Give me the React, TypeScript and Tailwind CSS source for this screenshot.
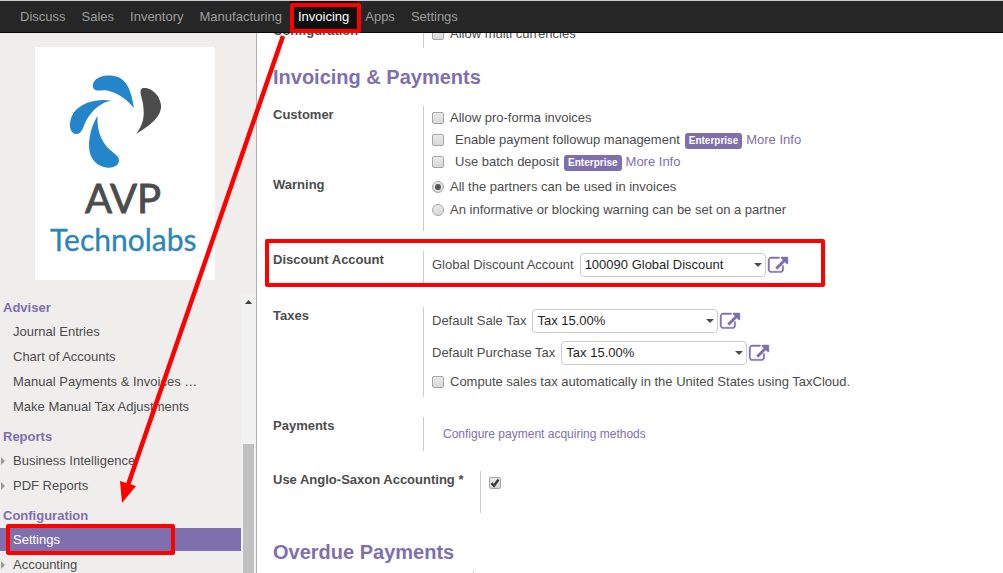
import React, { ReactNode, useId } from "react";

const navItems = ["Discuss", "Sales", "Inventory", "Manufacturing", "Invoicing", "Apps", "Settings"];

type MenuItem = { label: string; parent?: boolean; active?: boolean };
const menu: { title: string; items: MenuItem[] }[] = [
  {
    title: "Adviser",
    items: [
      { label: "Journal Entries" },
      { label: "Chart of Accounts" },
      { label: "Manual Payments & Invoices …" },
      { label: "Make Manual Tax Adjustments" },
    ],
  },
  {
    title: "Reports",
    items: [
      { label: "Business Intelligence", parent: true },
      { label: "PDF Reports", parent: true },
    ],
  },
  {
    title: "Configuration",
    items: [
      { label: "Settings", active: true },
      { label: "Accounting", parent: true },
    ],
  },
];

function Logo() {
  return (
    <svg viewBox="0 0 180 233" className="block w-[180px] shrink-0 bg-white" role="img" aria-label="AVP Technolabs">
      <g fill="#2585cb">
        <path d="M59 42C55 36 62 28 75 28.500C91 29 96 42 99 61C92 53 84 46 72 43.500C66 42.500 62 45 59 42Z" />
        <path d="M76 53.500C63 51.500 46 55 38.500 66C33 75 34 86 41 87C48 88 48 77 54 69C60 61 66 56 76 53.500Z" />
        <path d="M62.500 69C55 81 51 100 57 111C63 122 78 123 83 117C87 110 79 107 73 101C66 93 62 84 62.500 69Z" />
      </g>
      <path fill="#4c4c4c" d="M108 41C116 40 125 48 126 58C127 70 114 79 101 87C108 78 110 70 108 57C107 50 103 42 108 41Z" />
      <text x="50" y="166" fill="#4c4c4c" stroke="#4c4c4c" strokeWidth="0.900" fontSize="40" fontFamily="Lato, sans-serif">AVP</text>
      <text x="15" y="204" fill="#2a86b4" stroke="#2a86b4" strokeWidth="0.300" fontSize="30" fontFamily="Lato, sans-serif">Technolabs</text>
    </svg>
  );
}

function Check({ label, checked, wide, id }: { label?: string; checked?: boolean; wide?: boolean; id: string }) {
  return (
    <>
      <span className="relative flex size-3 shrink-0">
        <input
          id={id}
          type="checkbox"
          defaultChecked={checked}
          aria-label={label ? undefined : "Use Anglo-Saxon Accounting"}
          className="peer size-3 appearance-none rounded-[2px] border border-[#a6a6a6] bg-linear-to-b from-[#eaeaea] to-[#d8d8d8]"
        />
        <svg viewBox="0 0 12 12" className="pointer-events-none absolute inset-0 hidden peer-checked:block">
          <path d="M2.500 6.200L5 8.800L9.500 2.500" fill="none" stroke="#3c3c3c" strokeWidth="2.400" />
        </svg>
      </span>
      {label && (
        <label htmlFor={id} className={wide ? "ml-[11px]" : "ml-1.5"}>
          {label}
        </label>
      )}
    </>
  );
}

function CheckRow({ label, enterprise }: { label: string; enterprise?: boolean }) {
  const id = useId();
  return (
    <div className="flex h-[22px] items-center">
      <Check id={id} label={label} wide={enterprise} />
      {enterprise && (
        <>
          <span className="mt-0.5 ml-[5px] rounded-[3px] bg-[#7f6fac] px-1 text-[10px] leading-4 font-bold text-white">Enterprise</span>
          <a href="#" className="ml-1 text-[#7f6fac]">More Info</a>
        </>
      )}
    </div>
  );
}

function RadioRow({ label, checked }: { label: string; checked?: boolean }) {
  const id = useId();
  return (
    <div className="flex h-[22px] items-center">
      <span className="relative flex size-3 shrink-0">
        <input
          id={id}
          type="radio"
          name="warning"
          defaultChecked={checked}
          className="peer size-3 appearance-none rounded-full border border-[#a6a6a6] bg-linear-to-b from-[#eaeaea] to-[#d8d8d8]"
        />
        <span className="pointer-events-none absolute inset-[3px] hidden rounded-full bg-[#555] peer-checked:block" />
      </span>
      <label htmlFor={id} className="ml-1.5">{label}</label>
    </div>
  );
}

function SelectRow({ label, value }: { label: string; value: string }) {
  const id = useId();
  return (
    <div className="flex h-6 items-center">
      <label htmlFor={id}>{label}</label>
      <span className="relative ml-1.5 flex w-[186px]">
        <select id={id} className="h-6 w-full appearance-none rounded-[4px] border border-[#ccc] bg-white px-1 text-[13px] text-[#1f1f1f]">
          <option>{value}</option>
        </select>
        <svg viewBox="0 0 8 4" className="pointer-events-none absolute top-[10px] right-1 h-1 w-2">
          <path d="M0 0H8L4 4Z" fill="#4c4c4c" />
        </svg>
      </span>
      <button type="button" aria-label="Open record" className="ml-0.5 text-[#7f6fac]">
        <svg viewBox="0 0 1792 1536" className="block h-[17px] w-5 overflow-visible" fill="currentColor" stroke="currentColor" strokeWidth="40">
          <path d="M1408 800v320q0 119-84.500 203.500t-203.500 84.500h-832q-119 0-203.500-84.500t-84.500-203.500v-832q0-119 84.500-203.500t203.500-84.500h704q14 0 23 9t9 23v64q0 14-9 23t-23 9h-704q-66 0-113 47t-47 113v832q0 66 47 113t113 47h832q66 0 113-47t47-113v-320q0-14 9-23t23-9h64q14 0 23 9t9 23zm384-736v512q0 26-19 45t-45 19-45-19l-176-176-652 652q-10 10-23 10t-23-10l-114-114q-10-10-10-23t10-23l652-652-176-176q-19-19-19-45t19-45 45-19h512q26 0 45 19t19 45z" />
        </svg>
      </button>
    </div>
  );
}

function Group({ title, children, labelWidth = "w-[150px]", className = "" }: { title: string; children: ReactNode; labelWidth?: string; className?: string }) {
  return (
    <section className="flex">
      <h3 className={`${labelWidth} shrink-0 leading-[18px] font-bold`}>{title}</h3>
      <div className={`flex-1 border-l border-[#ccc] pl-2 ${className}`}>{children}</div>
    </section>
  );
}

export default function App() {
  return (
    <div className="relative flex h-screen flex-col overflow-hidden bg-white font-['Liberation_Sans',Arial,sans-serif] text-[13px] text-[#4c4c4c]">
      <nav className="flex h-[33px] shrink-0 border-t border-b border-t-[#ccc] border-b-[#080808] bg-[#262626] pl-3">
        {navItems.map((item) => (
          <a
            key={item}
            href="#"
            className={
              item === "Invoicing"
                ? "relative flex items-center bg-[#0f0f0f] px-2 text-white"
                : "flex items-center px-2 text-[#9d9d9d]"
            }
          >
            {item}
            {item === "Invoicing" && (
              <span className="absolute top-0.5 -right-1 -bottom-px left-0 z-10 rounded-[2px] border-4 border-[#f00]" />
            )}
          </a>
        ))}
      </nav>

      <div className="flex min-h-0 flex-1">
        <aside className="flex w-[257px] shrink-0 flex-col border-r border-[#afafb6] bg-[#f0eeed]">
          <div className="flex shrink-0 justify-start pt-3.5 pb-3.5 pl-[35px]">
            <Logo />
          </div>
          <div className="flex min-h-0 flex-1">
            <div className="min-w-0 flex-1 overflow-hidden pt-1">
              {menu.map((section) => (
                <section key={section.title} className="mb-[9px]">
                  <h4 className="mb-0.5 pl-[3px] leading-5 font-bold text-[#7f6fac]">{section.title}</h4>
                  <ul className="flex flex-col gap-0.5">
                    {section.items.map((item) => (
                      <li key={item.label} className="relative">
                        <a
                          href="#"
                          className={
                            item.active
                              ? "flex h-[23px] items-center bg-[#7f6fac] text-white"
                              : "flex h-[23px] items-center"
                          }
                        >
                          <span className="flex w-[13px] shrink-0 pl-px">
                            {item.parent && (
                              <svg viewBox="0 0 4 8" className="h-2 w-1">
                                <path d="M0 0L4 4L0 8Z" fill="#999" />
                              </svg>
                            )}
                          </span>
                          <span className="whitespace-nowrap">{item.label}</span>
                        </a>
                        {item.active && (
                          <span className="absolute -top-1 -bottom-1 left-1.5 z-10 w-[169px] rounded-[2px] border-4 border-[#f00]" />
                        )}
                      </li>
                    ))}
                  </ul>
                </section>
              ))}
            </div>
            <div className="flex w-[15px] shrink-0 flex-col items-center bg-[#f1f1f1] pt-1.5">
              <svg viewBox="0 0 7 4" className="h-1 w-[7px] shrink-0">
                <path d="M3.500 0L7 4H0Z" fill="#404040" />
              </svg>
              <div className="mt-[140px] w-[11px] flex-1 bg-[#c1c1c1]" />
            </div>
          </div>
        </aside>

        <main className="min-w-0 flex-1 overflow-hidden pl-4">
          <div className="-mt-[11px]">
            <Group title="Configuration" className="pt-px pb-[3px]">
              <CheckRow label="Allow multi currencies" />
            </Group>

            <h2 className="pt-4 pb-4 text-[20px] leading-[26px] font-bold text-[#7f6fac]">Invoicing &amp; Payments</h2>

            <div className="flex flex-col gap-5">
              <div>
                <Group title="Customer" className="pt-px pb-[3px]">
                  <CheckRow label="Allow pro-forma invoices" />
                  <CheckRow label="Enable payment followup management" enterprise />
                  <CheckRow label="Use batch deposit" enterprise />
                </Group>
                <Group title="Warning" className="flex flex-col gap-px pb-2.5">
                  <RadioRow label="All the partners can be used in invoices" checked />
                  <RadioRow label="An informative or blocking warning can be set on a partner" />
                </Group>
              </div>

              <div className="relative">
                <Group title="Discount Account" className="pt-0.5 pb-2.5">
                  <SelectRow label="Global Discount Account" value="100090 Global Discount" />
                </Group>
                <span className="pointer-events-none absolute -top-3 bottom-0 -left-2 w-[560px] rounded-[2px] border-4 border-[#f00]" />
              </div>

              <Group title="Taxes" className="pt-0.5 pb-1">
                <div className="flex flex-col gap-2">
                  <SelectRow label="Default Sale Tax" value="Tax 15.00%" />
                  <SelectRow label="Default Purchase Tax" value="Tax 15.00%" />
                </div>
                <div className="pt-1.5">
                  <CheckRow label="Compute sales tax automatically in the United States using TaxCloud." />
                </div>
              </Group>

              <Group title="Payments" className="pt-2 pb-2">
                <a href="#" className="ml-[11px] block text-[12px] leading-[18px] text-[#7f6fac]">Configure payment acquiring methods</a>
              </Group>

              <Group title="Use Anglo-Saxon Accounting *" labelWidth="w-[207px]" className="pt-1.5 pb-6">
                <Check id="anglo-saxon" checked />
              </Group>
            </div>

            <h2 className="pt-[26px] pb-1.5 text-[20px] leading-[26px] font-bold text-[#7f6fac]">Overdue Payments</h2>
            <Group title="" labelWidth="w-[200px]" className="h-10">{null}</Group>
          </div>
        </main>
      </div>

      <svg className="pointer-events-none absolute top-0 left-0 z-20 h-[573px] w-[400px]" viewBox="0 0 400 573" aria-hidden="true">
        <path d="M283 36L128 485" stroke="#f00" strokeWidth="4.500" />
        <path d="M120 481L136 486L122 503Z" fill="#f00" />
      </svg>
    </div>
  );
}
